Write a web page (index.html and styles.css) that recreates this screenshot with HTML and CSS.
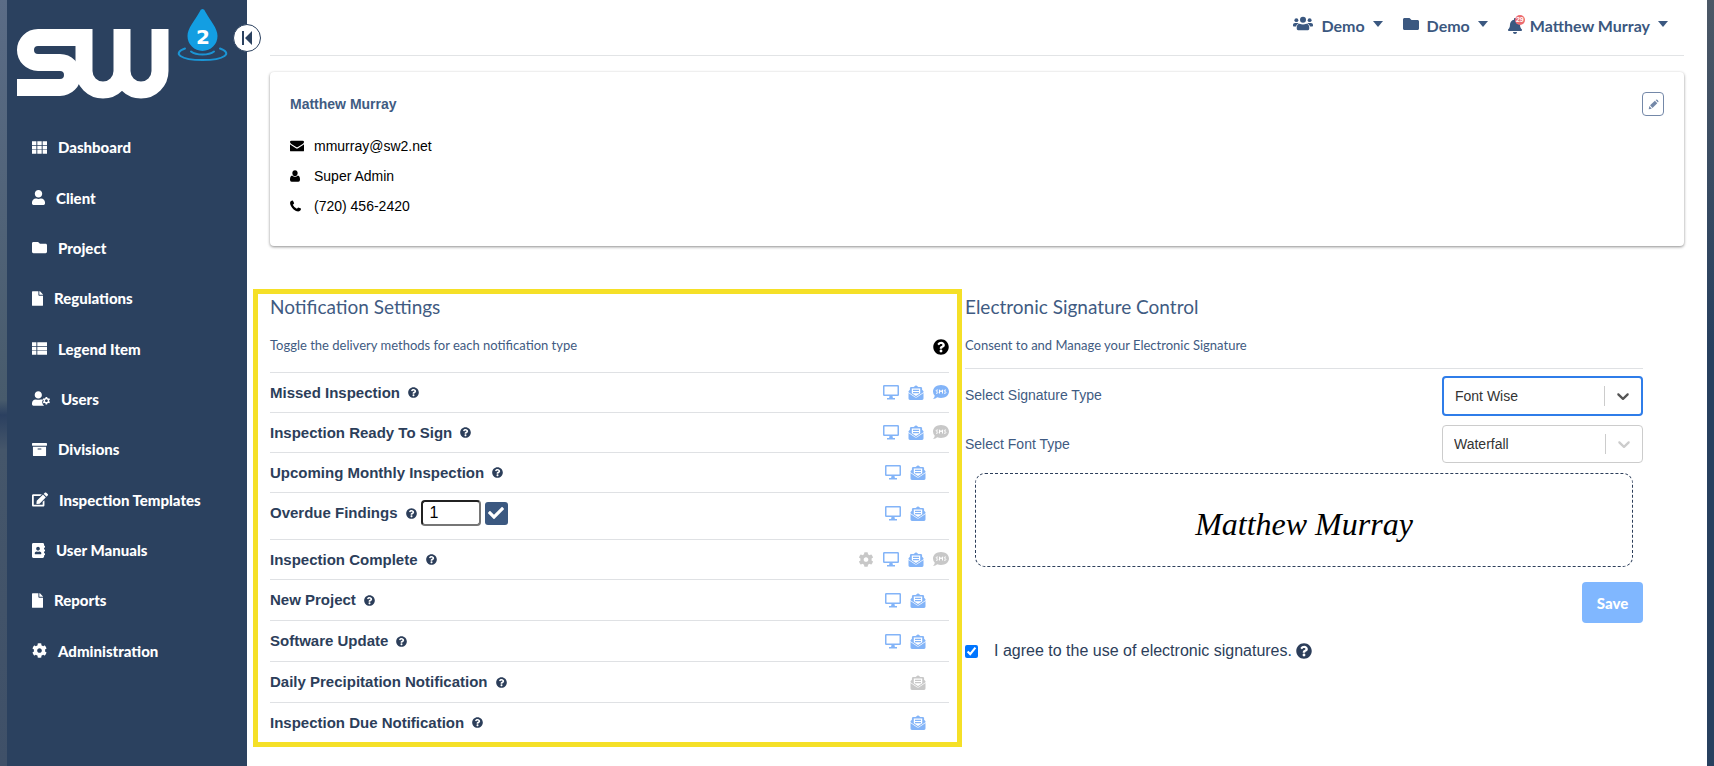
FILE: index.html
```html
<!DOCTYPE html>
<html lang="en">
<head>
    <meta charset="UTF-8">
    <meta name="viewport" content="width=device-width, initial-scale=1.0">
    <title>SW2 - Profile</title>
    <link rel="stylesheet" href="styles.css">
</head>
<body>

    <!-- Icon set -->
    <svg class="sprite" aria-hidden="true">
        <symbol id="i-grid" viewBox="0 0 512 512"><path d="M0 40h149v128H0zM181 40h150v128H181zM363 40h149v128H363zM0 192h149v128H0zM181 192h150v128H181zM363 192h149v128H363zM0 344h149v128H0zM181 344h150v128H181zM363 344h149v128H363z"/></symbol>
        <symbol id="i-list" viewBox="0 0 512 512"><path d="M0 40h149v128H0zM181 40h331v128H181zM0 192h149v128H0zM181 192h331v128H181zM0 344h149v128H0zM181 344h331v128H181z"/></symbol>
        <symbol id="i-user" viewBox="0 0 448 512"><path d="M224 256c70.7 0 128-57.3 128-128S294.7 0 224 0 96 57.3 96 128s57.3 128 128 128zm89.6 32h-16.7c-22.2 10.2-46.9 16-72.9 16s-50.6-5.8-72.9-16h-16.7C60.2 288 0 348.2 0 422.4V464c0 26.5 21.5 48 48 48h352c26.5 0 48-21.5 48-48v-41.6c0-74.2-60.2-134.4-134.4-134.4z"/></symbol>
        <symbol id="i-folder" viewBox="0 0 512 512"><path d="M464 128H272l-64-64H48C21.500 64 0 85.500 0 112v288c0 26.500 21.500 48 48 48h416c26.500 0 48-21.500 48-48V176c0-26.500-21.500-48-48-48z"/></symbol>
        <symbol id="i-file" viewBox="0 0 384 512"><path d="M224 136V0H24C10.700 0 0 10.700 0 24v464c0 13.300 10.700 24 24 24h336c13.300 0 24-10.700 24-24V160H248c-13.200 0-24-10.800-24-24zm160-14.100v6.100H256V0h6.100c6.400 0 12.500 2.500 17 7l97.900 98c4.500 4.500 7 10.600 7 16.900z"/></symbol>
        <symbol id="i-usercog" viewBox="0 0 640 512"><path d="M224 256c70.700 0 128-57.300 128-128S294.700 0 224 0 96 57.300 96 128s57.300 128 128 128zM134 288C60 288 0 348 0 422v42c0 26 21 48 48 48h352c10 0 18-3 26-7-30-20-50-50-58-86-12-40-2-90 30-120-20-8-50-11-84-11-60 20-120 20-180 0z"/><path fill-rule="evenodd" d="M484 200h56l8 42 26 15 40-14 27 48-32 28v32l32 28-27 48-40-14-26 15-8 42h-56l-8-42-26-15-40 14-27-48 32-28v-32l-32-28 27-48 40 14 26-15zM512 287a48 48 0 1 0 1 0z"/></symbol>
        <symbol id="i-archive" viewBox="0 0 512 512"><path d="M32 448c0 17.700 14.300 32 32 32h384c17.700 0 32-14.300 32-32V160H32v288zm160-212c0-6.600 5.400-12 12-12h104c6.600 0 12 5.400 12 12v8c0 6.600-5.400 12-12 12H204c-6.600 0-12-5.400-12-12v-8zM480 32H32C14.300 32 0 46.300 0 64v48c0 8.800 7.200 16 16 16h480c8.800 0 16-7.200 16-16V64c0-17.700-14.300-32-32-32z"/></symbol>
        <symbol id="i-edit" viewBox="0 0 576 512"><path d="M402.600 83.200l90.200 90.200c3.800 3.800 3.800 10 0 13.800L274.400 405.600l-92.800 10.300c-12.400 1.400-22.900-9.100-21.500-21.500l10.300-92.800L388.800 83.200c3.800-3.800 10-3.800 13.800 0zm162-22.900l-48.800-48.800c-15.200-15.200-39.900-15.200-55.200 0l-35.400 35.400c-3.800 3.800-3.800 10 0 13.800l90.200 90.200c3.800 3.800 10 3.800 13.800 0l35.400-35.400c15.200-15.300 15.200-40 0-55.200zM384 346.200V448H64V128h229.800c3.200 0 6.200-1.300 8.500-3.500l40-40c7.600-7.600 2.200-20.500-8.500-20.500H48C21.500 64 0 85.500 0 112v352c0 26.500 21.500 48 48 48h352c26.500 0 48-21.500 48-48V306.200c0-10.700-12.900-16-20.500-8.500l-40 40c-2.200 2.300-3.500 5.300-3.500 8.500z"/></symbol>
        <symbol id="i-book" viewBox="0 0 448 512"><path d="M436 160c6.600 0 12-5.400 12-12v-40c0-6.600-5.400-12-12-12h-20V48c0-26.500-21.500-48-48-48H48C21.500 0 0 21.500 0 48v416c0 26.500 21.500 48 48 48h320c26.500 0 48-21.500 48-48v-48h20c6.600 0 12-5.400 12-12v-40c0-6.600-5.400-12-12-12h-20v-64h20c6.600 0 12-5.400 12-12v-40c0-6.600-5.400-12-12-12h-20v-64h20zm-228-32c35.300 0 64 28.700 64 64s-28.700 64-64 64-64-28.700-64-64 28.700-64 64-64zm112 236.800c0 10.600-10 19.200-22.400 19.200H118.400C106 384 96 375.400 96 364.800v-19.200c0-31.800 30.100-57.600 67.200-57.600h5c12.300 5.100 25.700 8 39.800 8s27.600-2.900 39.800-8h5c37.100 0 67.200 25.800 67.200 57.600v19.200z"/></symbol>
        <symbol id="i-cog" viewBox="0 0 512 512"><path d="M487.400 315.700l-42.600-24.600c4.300-23.200 4.300-47 0-70.200l42.600-24.600c4.900-2.800 7.100-8.600 5.500-14-11.100-35.600-30-67.800-54.700-94.600-3.800-4.100-10-5.100-14.800-2.300L380.800 110c-17.900-15.400-38.500-27.300-60.800-35.100V25.800c0-5.600-3.900-10.500-9.400-11.700-36.700-8.200-74.300-7.800-109.200 0-5.500 1.200-9.400 6.100-9.400 11.700V75c-22.200 7.900-42.800 19.800-60.800 35.100L88.700 85.500c-4.900-2.800-11-1.900-14.800 2.300-24.700 26.700-43.600 58.900-54.700 94.600-1.700 5.400.6 11.200 5.500 14L67.300 221c-4.300 23.200-4.300 47 0 70.200l-42.600 24.600c-4.900 2.800-7.100 8.600-5.500 14 11.100 35.600 30 67.800 54.700 94.600 3.800 4.100 10 5.100 14.800 2.300l42.600-24.600c17.900 15.400 38.500 27.300 60.800 35.100v49.200c0 5.600 3.900 10.500 9.400 11.700 36.700 8.200 74.300 7.800 109.200 0 5.500-1.200 9.400-6.100 9.400-11.700v-49.200c22.200-7.900 42.800-19.800 60.800-35.100l42.600 24.600c4.900 2.800 11 1.900 14.800-2.300 24.700-26.700 43.600-58.900 54.700-94.600 1.500-5.500-.7-11.300-5.600-14.100zM256 336c-44.100 0-80-35.900-80-80s35.900-80 80-80 80 35.900 80 80-35.900 80-80 80z"/></symbol>
        <symbol id="i-help" viewBox="0 0 512 512"><path d="M504 256c0 137-111 248-248 248S8 393 8 256C8 119 119 8 256 8s248 111 248 248zM262.700 90c-54.500 0-89.300 23-116.600 63.800-3.500 5.300-2.400 12.400 2.700 16.200l34.700 26.300c5.200 4 12.600 3 16.700-2.100 17.900-22.700 30.100-35.800 57.300-35.800 20.400 0 45.700 13.100 45.700 33 0 15-12.400 22.600-32.500 33.900C247.100 238.500 216 254.900 216 296v4c0 6.600 5.400 12 12 12h56c6.600 0 12-5.400 12-12v-1.300c0-28.500 83.200-29.700 83.200-106.700 0-58-60.200-102-116.500-102zM256 338c-25.400 0-46 20.600-46 46s20.600 46 46 46 46-20.600 46-46-20.600-46-46-46z"/></symbol>
        <symbol id="i-bell" viewBox="0 0 448 512"><path d="M224 512c35.300 0 64-28.700 64-64H160c0 35.300 28.700 64 64 64zm215.400-149.700c-19.300-20.800-55.500-52-55.500-154.300 0-77.700-54.500-139.900-127.900-155.200V32c0-17.700-14.300-32-32-32s-32 14.300-32 32v20.800C118.600 68.100 64.100 130.300 64.100 208c0 102.300-36.200 133.500-55.500 154.300-6 6.400-8.700 14.200-8.600 21.700.1 16.400 13 32 32.100 32h383.800c19.100 0 32-15.600 32.100-32 .1-7.500-2.600-15.300-8.500-21.700z"/></symbol>
        <symbol id="i-users" viewBox="0 0 640 512"><circle cx="320" cy="120" r="96"/><circle cx="108" cy="132" r="62"/><circle cx="532" cy="132" r="62"/><path d="M212 250c64 32 152 32 216 0 54 6 92 50 92 110v50c0 24-18 42-42 42H162c-24 0-42-18-42-42v-50c0-60 38-104 92-110zM64 220h92c12 0 24 4 32 10-46 16-80 54-90 104H32c-18 0-32-14-32-32v-18c0-36 28-64 64-64zM576 220h-92c-12 0-24 4-32 10 46 16 80 54 90 104h66c18 0 32-14 32-32v-18c0-36-28-64-64-64z"/></symbol>
        <symbol id="i-check" viewBox="0 0 512 512"><path d="M173.900 439.400L7.500 273c-10-10-10-26.200 0-36.200l36.200-36.200c10-10 26.200-10 36.200 0L192 312.700 432.100 72.600c10-10 26.200-10 36.200 0l36.200 36.200c10 10 10 26.200 0 36.200L210.100 439.400c-10 10-26.200 10-36.200 0z"/></symbol>
        <symbol id="i-pencil" viewBox="0 0 16 16"><path d="M1 15l1-5 3.500 4zM3 9l7-6.500 3.500 3.500-7 7zM11 1.500Q12.500 0 14 1.500L15 3q.8 1-.5 2z"/></symbol>
        <symbol id="i-mail" viewBox="0 0 16 16"><path d="M0 3.500Q0 2 1.500 2h13Q16 2 16 3.500q0 1-1.500 2.200L9 9.200q-1 .6-2 0L1.500 5.700Q0 4.500 0 3.500zM0 6q.5.600 1.500 1.200L6.800 10.700q1.200.7 2.400 0L14.500 7.200Q15.500 6.600 16 6v7q0 1-1 1H1q-1 0-1-1z"/></symbol>
        <symbol id="i-person" viewBox="0 0 12 14"><path d="M6 0c2 0 3.200 1.500 3.200 3.500S8 7.300 6 7.300 2.800 5.500 2.800 3.500 4 0 6 0zM2.500 6.500Q6 10 9.500 6.500 12 7 12 11.500 12 14 10 14H2q-2 0-2-2.500Q0 7 2.500 6.500z"/></symbol>
        <symbol id="i-phone" viewBox="0 0 12 12"><path d="M.5 1.200Q2.200-.2 3.200.2q.8 1.200 1.300 2.800-.2.700-1.500 1.500Q4.500 7.600 7.500 9q.9-1.400 1.500-1.500 1.800.6 2.900 1.300.3 1.200-1 2.500Q8 13 4 9.700-1.200 4.500.5 1.200z"/></symbol>
        <symbol id="i-screen" viewBox="0 0 16 15"><path fill-rule="evenodd" d="M1.300 0h13.400Q16 0 16 1.300v8.400Q16 11 14.700 11H9.500l.4 2H12v1.500H4V13h2.100l.4-2H1.300Q0 11 0 9.700V1.300Q0 0 1.300 0zM1.500 1.500v8h13v-8z"/></symbol>
        <symbol id="i-letter" viewBox="0 0 16 16"><path fill-rule="evenodd" d="M0 6.600L1.500 5V3.500Q1.500 2 3 2h2.500L8 .2 10.500 2H13q1.500 0 1.500 1.500V5L16 6.600v1L8 13 0 7.600zM3.500 3.800v5L8 11.700l4.500-2.900v-5z"/><path d="M0 8.600l7.200 4.600q.8.500 1.600 0L16 8.600v5.900q0 1.500-1.500 1.500h-13Q0 16 0 14.500zM4.800 5h6.400v1.300H4.800zM4.800 7.500h6.400v1.300H4.800z"/></symbol>
        <symbol id="i-sms" viewBox="0 0 16 15"><path d="M8 0c4.500 0 8 2.800 8 6.500S12.500 13 8 13q-2 0-3.700-.8Q2.500 14 0 14q1.500-1.600 1.800-3.300Q0 9 0 6.500C0 2.800 3.500 0 8 0z"/><path class="knock" d="M4.900 5H3.600q-.8.800 0 1.400l.8.300q.8.800 0 1.500H3M6.500 8.500v-3.700L8 7l1.500-2.200v3.700M13 5h-1.300q-.8.800 0 1.400l.8.300q.8.800 0 1.500H11"/></symbol>
        <symbol id="i-chevron" viewBox="0 0 20 20"><path d="M4.500 7.500c.5-.4 1.100-.4 1.600 0L10 11.300l3.900-3.800c.5-.4 1.100-.4 1.600 0 .4.500.4 1.200 0 1.700l-4.700 4.500c-.5.400-1.100.4-1.600 0L4.500 9.200c-.4-.5-.4-1.200 0-1.700z"/></symbol>
        <symbol id="i-caret" viewBox="0 0 10 6"><path d="M0 0h10L5 6z"/></symbol>
        <symbol id="i-collapse" viewBox="0 0 10 14"><path d="M0 0h2v14H0zM10 0v14L3 7z"/></symbol>
    </svg>

    <!-- Sidebar -->
    <aside class="sidebar">
        <a class="logo" href="#" aria-label="SW2 home">
            <svg width="224" height="104" viewBox="0 0 224 104">
                <g fill="none" stroke="#fff" stroke-width="17">
                    <path d="M85 37.500H31a12.500 12.500 0 0 0 0 25H53a12.500 12.500 0 0 1 0 25H10"/>
                    <path d="M77 29V71a19 19 0 0 0 38 0V29M115 71a19 19 0 0 0 38 0V29"/>
                </g>
                <path fill="#139ee2" d="M195.500 9q2 0 3 3c5 9 12 16 12 24a15 15 0 0 1-30 0c0-8 7-15 12-24q1-3 3-3z"/>
                <path fill="none" stroke="#1b94d4" stroke-width="2" stroke-linecap="round" d="M178 48.500C165 53 173 60 195.500 60S226 53 213 48.500M184 51.500q4 3 11.500 3t11.500-3"/>
                <text class="logo-num" x="196" y="44" text-anchor="middle">2</text>
            </svg>
        </a>
        <button class="collapse" aria-label="Collapse menu"><svg width="10" height="14"><use href="#i-collapse"/></svg></button>
        <nav>
            <a href="#"><svg width="15" height="15"><use href="#i-grid"/></svg>Dashboard</a>
            <a href="#"><svg width="13" height="15"><use href="#i-user"/></svg>Client</a>
            <a href="#"><svg width="15" height="15"><use href="#i-folder"/></svg>Project</a>
            <a href="#"><svg width="11" height="15"><use href="#i-file"/></svg>Regulations</a>
            <a href="#"><svg width="15" height="15"><use href="#i-list"/></svg>Legend Item</a>
            <a href="#"><svg width="18" height="15"><use href="#i-usercog"/></svg>Users</a>
            <a href="#"><svg width="15" height="15"><use href="#i-archive"/></svg>Divisions</a>
            <a href="#"><svg width="16" height="15"><use href="#i-edit"/></svg>Inspection Templates</a>
            <a href="#"><svg width="13" height="15"><use href="#i-book"/></svg>User Manuals</a>
            <a href="#"><svg width="11" height="15"><use href="#i-file"/></svg>Reports</a>
            <a href="#"><svg width="15" height="15"><use href="#i-cog"/></svg>Administration</a>
        </nav>
    </aside>

    <main>
        <!-- Header -->
        <header>
            <button class="menu"><svg width="20" height="16"><use href="#i-users"/></svg>Demo<svg class="caret" width="10" height="6"><use href="#i-caret"/></svg></button>
            <button class="menu"><svg width="16" height="16"><use href="#i-folder"/></svg>Demo<svg class="caret" width="10" height="6"><use href="#i-caret"/></svg></button>
            <button class="menu"><span class="bell"><svg width="14" height="16"><use href="#i-bell"/></svg><span class="count">29</span></span>Matthew Murray<svg class="caret" width="10" height="6"><use href="#i-caret"/></svg></button>
        </header>

        <!-- Profile card -->
        <section class="card">
            <div>
                <h1>Matthew Murray</h1>
                <ul>
                    <li><svg width="14" height="14"><use href="#i-mail"/></svg>mmurray@sw2.net</li>
                    <li><svg width="10" height="12"><use href="#i-person"/></svg>Super Admin</li>
                    <li><svg width="11" height="12"><use href="#i-phone"/></svg>(720) 456-2420</li>
                </ul>
            </div>
            <button class="edit" aria-label="Edit profile"><svg width="11" height="11"><use href="#i-pencil"/></svg></button>
        </section>

        <div class="columns">
            <!-- Notification settings -->
            <section class="notifications">
                <h2>Notification Settings</h2>
                <div class="intro">
                    <p>Toggle the delivery methods for each notification type</p>
                    <svg width="16" height="16"><use href="#i-help"/></svg>
                </div>
                <div class="row">
                    <h3>Missed Inspection</h3><svg class="tip"><use href="#i-help"/></svg>
                    <div class="toggles three">
                        <button aria-label="On screen"><svg><use href="#i-screen"/></svg></button>
                        <button aria-label="Email"><svg><use href="#i-letter"/></svg></button>
                        <button aria-label="SMS"><svg><use href="#i-sms"/></svg></button>
                    </div>
                </div>
                <div class="row">
                    <h3>Inspection Ready To Sign</h3><svg class="tip"><use href="#i-help"/></svg>
                    <div class="toggles three">
                        <button aria-label="On screen"><svg><use href="#i-screen"/></svg></button>
                        <button aria-label="Email"><svg><use href="#i-letter"/></svg></button>
                        <button class="off" aria-label="SMS"><svg><use href="#i-sms"/></svg></button>
                    </div>
                </div>
                <div class="row">
                    <h3>Upcoming Monthly Inspection</h3><svg class="tip"><use href="#i-help"/></svg>
                    <div class="toggles">
                        <button aria-label="On screen"><svg><use href="#i-screen"/></svg></button>
                        <button aria-label="Email"><svg><use href="#i-letter"/></svg></button>
                    </div>
                </div>
                <div class="row overdue">
                    <h3>Overdue Findings</h3><svg class="tip"><use href="#i-help"/></svg>
                    <input class="days" type="text" value="1" aria-label="Days overdue">
                    <button class="confirm" aria-label="Save days"><svg width="16" height="16"><use href="#i-check"/></svg></button>
                    <div class="toggles">
                        <button aria-label="On screen"><svg><use href="#i-screen"/></svg></button>
                        <button aria-label="Email"><svg><use href="#i-letter"/></svg></button>
                    </div>
                </div>
                <div class="row">
                    <h3>Inspection Complete</h3><svg class="tip"><use href="#i-help"/></svg>
                    <div class="toggles three">
                        <button class="off" aria-label="Options"><svg><use href="#i-cog"/></svg></button>
                        <button aria-label="On screen"><svg><use href="#i-screen"/></svg></button>
                        <button aria-label="Email"><svg><use href="#i-letter"/></svg></button>
                        <button class="off" aria-label="SMS"><svg><use href="#i-sms"/></svg></button>
                    </div>
                </div>
                <div class="row tall">
                    <h3>New Project</h3><svg class="tip"><use href="#i-help"/></svg>
                    <div class="toggles">
                        <button aria-label="On screen"><svg><use href="#i-screen"/></svg></button>
                        <button aria-label="Email"><svg><use href="#i-letter"/></svg></button>
                    </div>
                </div>
                <div class="row tall">
                    <h3>Software Update</h3><svg class="tip"><use href="#i-help"/></svg>
                    <div class="toggles">
                        <button aria-label="On screen"><svg><use href="#i-screen"/></svg></button>
                        <button aria-label="Email"><svg><use href="#i-letter"/></svg></button>
                    </div>
                </div>
                <div class="row tall">
                    <h3>Daily Precipitation Notification</h3><svg class="tip"><use href="#i-help"/></svg>
                    <div class="toggles">
                        <button class="off" aria-label="Email"><svg><use href="#i-letter"/></svg></button>
                    </div>
                </div>
                <div class="row">
                    <h3>Inspection Due Notification</h3><svg class="tip"><use href="#i-help"/></svg>
                    <div class="toggles">
                        <button aria-label="Email"><svg><use href="#i-letter"/></svg></button>
                    </div>
                </div>
            </section>

            <!-- Electronic signature -->
            <section class="signature">
                <h2>Electronic Signature Control</h2>
                <p class="sub">Consent to and Manage your Electronic Signature</p>
                <div class="field">
                    <label for="sigType">Select Signature Type</label>
                    <div class="select active">
                        <select id="sigType"><option>Font Wise</option></select>
                        <svg width="20" height="20"><use href="#i-chevron"/></svg>
                    </div>
                </div>
                <div class="field">
                    <label for="fontType">Select Font Type</label>
                    <div class="select">
                        <select id="fontType"><option>Waterfall</option></select>
                        <svg width="20" height="20"><use href="#i-chevron"/></svg>
                    </div>
                </div>
                <div class="preview">Matthew Murray</div>
                <button class="save">Save</button>
                <div class="agree">
                    <input type="checkbox" id="agree" checked>
                    <label for="agree">I agree to the use of electronic signatures.</label>
                    <svg width="16" height="16"><use href="#i-help"/></svg>
                </div>
            </section>
        </div>
    </main>

</body>
</html>
```
FILE: styles.css
```css
/* Basic Reset */
* { margin: 0; padding: 0; box-sizing: border-box; }

body {
    display: flex;
    min-height: 100vh;
    padding: 0 7px;
    font-family: "Liberation Sans", Arial, sans-serif;
    font-size: 14px;
    color: #2c3e5a;
    background: linear-gradient(#4c5866, #27405f 350px) right / 7px 100% no-repeat,
        linear-gradient(#5b6c86, #485b6c 400px, #2b4060 415px, #45566a 450px, #3f5068) left / 7px 100% no-repeat;
}
svg {
    display: block;
    flex: none;
    fill: currentColor;
}
button {
    border: none;
    background: none;
    font: inherit;
    color: inherit;
    cursor: pointer;
}
a {
    color: inherit;
    text-decoration: none;
}
.sprite {
    position: absolute;
    width: 0;
    height: 0;
}
.knock {
    fill: none;
    stroke: #fff;
    stroke-width: 1;
}

/* Sidebar */
.sidebar {
    position: relative;
    flex: none;
    width: 240px;
    padding-bottom: 80px;
    color: #fff;
    background-color: #2b415f;
}
.logo {
    display: block;
}
.logo-num {
    font: bold 20px "DejaVu Sans", sans-serif;
    fill: #fff;
}
.collapse {
    position: absolute;
    top: 24px;
    right: -14px;
    display: flex;
    align-items: center;
    justify-content: center;
    width: 28px;
    height: 28px;
    border: 1px solid #2b415f;
    border-radius: 50%;
    color: #2b415f;
    background-color: #fff;
}
.sidebar nav {
    display: grid;
    grid-auto-rows: 1fr;
    min-height: 554px;
    margin-top: 18px;
}
.sidebar nav a {
    display: flex;
    align-items: center;
    gap: 11px;
    padding-left: 25px;
    font-family: Lato, sans-serif;
    font-size: 15px;
    font-weight: 900;
}

/* Main area */
main {
    flex: 1;
    padding: 0 23px 19px;
    background-color: #fff;
}
header {
    display: flex;
    justify-content: flex-end;
    gap: 20px;
    height: 56px;
    padding: 16px 16px 0 0;
    border-bottom: 1px solid #e2e4e6;
    color: #3b5880;
}
.menu {
    display: flex;
    align-items: flex-start;
    gap: 8px;
    height: 20px;
    font-family: Lato, sans-serif;
    font-size: 16px;
    font-weight: bold;
    line-height: 20px;
}
.caret {
    margin-top: 5px;
}
.bell {
    position: relative;
    padding-top: 2px;
}
.count {
    position: absolute;
    top: -1px;
    right: -3px;
    width: 10px;
    height: 10px;
    border-radius: 50%;
    font: bold 7px/10px "Liberation Sans", sans-serif;
    color: #fff;
    background-color: #ec6b6f;
}

/* Profile card */
.card {
    display: flex;
    justify-content: space-between;
    align-items: flex-start;
    margin-top: 16px;
    padding: 20px 20px 25px;
    border-radius: 4px;
    box-shadow: 0 1px 3px rgba(0, 0, 0, 0.45);
}
.card h1 {
    margin-bottom: 15px;
    font-size: 14px;
    line-height: 24px;
    color: #3f5b82;
}
.card li {
    display: grid;
    grid-template-columns: 24px auto;
    align-items: center;
    line-height: 30px;
    list-style: none;
    color: #000;
}
.edit {
    display: flex;
    align-items: center;
    justify-content: center;
    width: 22px;
    height: 24px;
    border: 1px solid #7488a8;
    border-radius: 4px;
    color: #7488a8;
}

/* Two columns */
.columns {
    display: grid;
    grid-template-columns: 709px 1fr;
    gap: 3px;
    align-items: start;
    margin: 43px 41px 0 -17px;
}
h2 {
    font-family: Lato, sans-serif;
    font-size: 19px;
    font-weight: normal;
    line-height: 26px;
    color: #3f5b82;
}
.notifications {
    padding: 0 8px 0 12px;
    border: 5px solid #f5e027;
}
.intro {
    display: flex;
    justify-content: space-between;
    height: 52px;
    padding-top: 16px;
    color: #000;
}
.intro svg {
    margin-top: 3px;
}
.intro p, .sub {
    font-family: Lato, sans-serif;
    font-size: 13px;
    line-height: 18px;
    color: #3f5b82;
}
.row {
    display: flex;
    align-items: center;
    height: 40px;
    border-top: 1px solid #dfe1e4;
}
.tall {
    height: 41px;
}
.row h3 {
    margin-right: 8px;
    font-size: 15px;
    line-height: 20px;
}
.overdue {
    height: 47px;
    padding-bottom: 6px;
}
.tip {
    width: 11px;
    height: 11px;
}
.days {
    width: 60px;
    height: 26px;
    margin: 0 4px;
    padding: 0 7px;
    border: 2px inset #767676;
    border-radius: 4px;
    font: 16px "Liberation Sans", sans-serif;
}
.confirm {
    display: flex;
    align-items: center;
    justify-content: center;
    width: 23px;
    height: 23px;
    border-radius: 3px;
    color: #fff;
    background-color: #3b5880;
}
.toggles {
    display: flex;
    gap: 9px;
    margin-left: auto;
    padding-right: 23px;
    color: #83b4f8;
}
.toggles.three {
    padding-right: 0;
}
.toggles svg {
    width: 16px;
    height: 15px;
}
.off {
    color: #c8c8c8;
}

/* Signature column */
.signature h2 {
    margin-top: 5px;
}
.sub {
    margin: 16px 0 14px;
}
.field {
    display: flex;
    justify-content: space-between;
    height: 50px;
    padding-top: 7px;
    font-size: 14px;
    line-height: 38px;
    color: #3f5b82;
}
.sub + .field {
    border-top: 1px solid #dfe1e4;
}
.select {
    position: relative;
    width: 201px;
    height: 38px;
    border: 1px solid #ccc;
    border-radius: 4px;
    color: #ccc;
}
.select.active {
    height: 40px;
    border: 2px solid #2f7de9;
    color: #555;
}
.select select {
    display: block;
    appearance: none;
    width: 100%;
    height: 100%;
    padding-left: 11px;
    border: none;
    font: 14px "Liberation Sans", sans-serif;
    color: #333;
    background: linear-gradient(#ccc, #ccc) right 36px center / 1px 20px no-repeat;
}
.select svg {
    position: absolute;
    top: 8px;
    right: 8px;
    pointer-events: none;
}
.preview {
    height: 94px;
    margin: 5px 10px 15px;
    border: 1px dashed #2c3e5a;
    border-radius: 10px;
    font: italic 32px/100px "Liberation Serif", serif;
    text-align: center;
    color: #000;
}
.save {
    display: block;
    width: 61px;
    height: 41px;
    margin-left: auto;
    border-radius: 4px;
    font-family: Lato, sans-serif;
    font-size: 15px;
    font-weight: 900;
    color: #fff;
    background-color: #80b7ff;
}
.agree {
    display: flex;
    align-items: center;
    margin-top: 18px;
    font-size: 16px;
    line-height: 20px;
}
.agree input {
    width: 13px;
    height: 13px;
    margin-right: 16px;
}
.agree svg {
    margin-left: 4px;
}
```
